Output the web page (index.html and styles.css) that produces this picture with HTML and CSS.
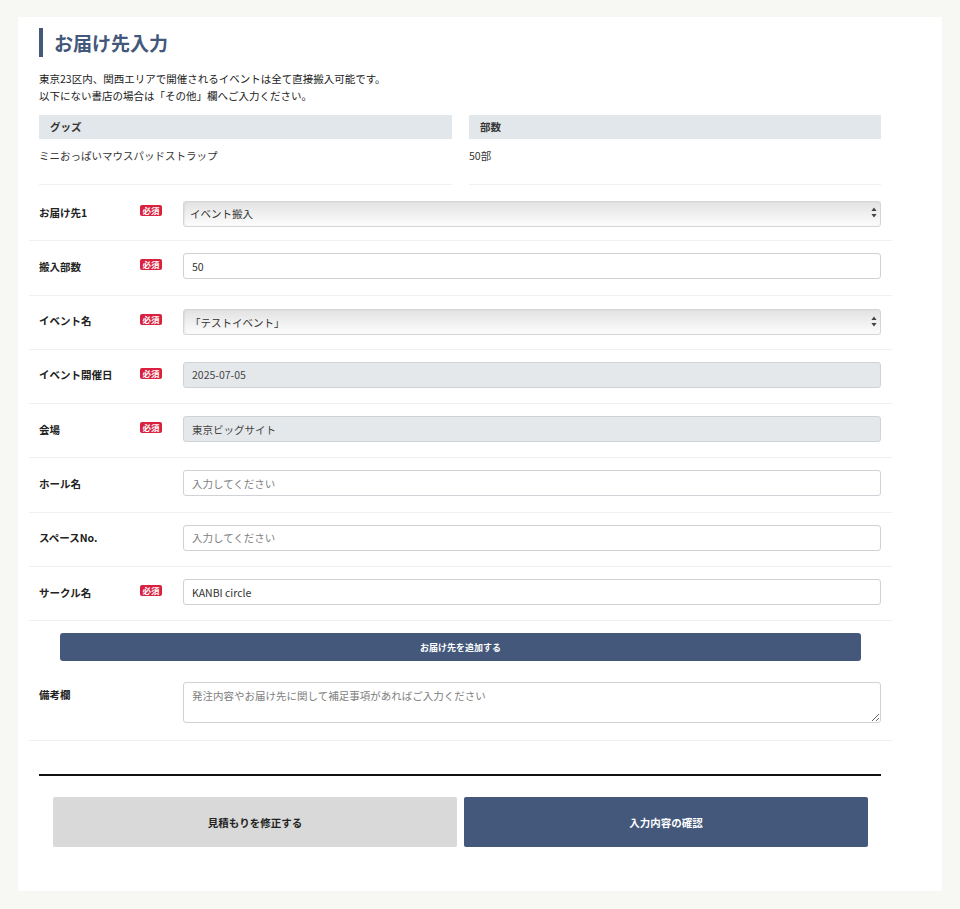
FILE: index.html
```html
<!DOCTYPE html>
<html lang="ja">
<head>
<meta charset="utf-8">
<title>お届け先入力</title>
<link rel="stylesheet" href="styles.css">
</head>
<body>
<div class="page">
  <div class="card">
    <div class="intro">
      <h1 class="title">お届け先入力</h1>
      <p class="desc">東京23区内、関西エリアで開催されるイベントは全て直接搬入可能です。<br>以下にない書店の場合は「その他」欄へご入力ください。</p>
      <div class="summary">
        <div class="sum-col">
          <div class="sum-head">グッズ</div>
          <div class="sum-body">ミニおっぱいマウスパッドストラップ</div>
        </div>
        <div class="sum-col">
          <div class="sum-head">部数</div>
          <div class="sum-body">50部</div>
        </div>
      </div>
    </div>

    <div class="form">
      <div class="row first">
        <div class="label">お届け先1</div>
        <span class="badge">必須</span>
        <div class="select-wrap">
          <select class="select"><option>イベント搬入</option></select>
          <svg class="arrows" width="6" height="11" viewBox="0 0 6 11"><path d="M3 0.5 L5.6 4 H0.4 Z M3 10.5 L5.6 7 H0.4 Z" fill="#444"/></svg>
        </div>
      </div>
      <div class="row">
        <div class="label">搬入部数</div>
        <span class="badge">必須</span>
        <input class="input" type="text" value="50">
      </div>
      <div class="row">
        <div class="label">イベント名</div>
        <span class="badge">必須</span>
        <div class="select-wrap">
          <select class="select"><option>「テストイベント」</option></select>
          <svg class="arrows" width="6" height="11" viewBox="0 0 6 11"><path d="M3 0.5 L5.6 4 H0.4 Z M3 10.5 L5.6 7 H0.4 Z" fill="#444"/></svg>
        </div>
      </div>
      <div class="row">
        <div class="label">イベント開催日</div>
        <span class="badge">必須</span>
        <input class="input disabled" type="text" value="2025-07-05" disabled>
      </div>
      <div class="row">
        <div class="label">会場</div>
        <span class="badge">必須</span>
        <input class="input disabled" type="text" value="東京ビッグサイト" disabled>
      </div>
      <div class="row">
        <div class="label">ホール名</div>
        <input class="input" type="text" placeholder="入力してください">
      </div>
      <div class="row">
        <div class="label">スペースNo.</div>
        <input class="input" type="text" placeholder="入力してください">
      </div>
      <div class="row">
        <div class="label">サークル名</div>
        <span class="badge">必須</span>
        <input class="input" type="text" value="KANBI circle">
      </div>

      <div class="add-area">
        <button class="add-btn" type="button">お届け先を追加する</button>
      </div>

      <div class="row remark">
        <div class="label">備考欄</div>
        <textarea class="textarea" placeholder="発注内容やお届け先に関して補足事項があればご入力ください"></textarea>
      </div>
    </div>

    <hr class="divider">

    <div class="actions">
      <button class="btn btn-back" type="button">見積もりを修正する</button>
      <button class="btn btn-next" type="button">入力内容の確認</button>
    </div>
  </div>
</div>
</body>
</html>
```
FILE: styles.css
```css
* { box-sizing: border-box; }

html, body {
  margin: 0;
  padding: 0;
  background: #f7f7f3;
  font-family: "Noto Sans CJK JP", "Noto Sans", sans-serif;
  color: #222;
}

.page {
  padding: 17px 18px 18px;
}

.card {
  background: #fff;
  width: 924px;
  height: 874px;
  padding: 11px 50px 0 11px;
}

.intro {
  padding: 0 11px 0 10px;
}

.title {
  margin: 0;
  height: 29px;
  border-left: 4px solid #43587a;
  padding-left: 11px;
  font-size: 19px;
  line-height: 29px;
  font-weight: 700;
  color: #43587a;
}

.desc {
  margin: 13px 0 0;
  font-size: 10.5px;
  line-height: 17px;
  color: #222;
}

.summary {
  margin-top: 11px;
  display: grid;
  grid-template-columns: 413px 1fr;
  column-gap: 17px;
}

.sum-head {
  background: #e1e7ea;
  height: 24px;
  line-height: 24px;
  padding-left: 11px;
  font-size: 10.5px;
  font-weight: 700;
  color: #333;
}

.sum-body {
  height: 46px;
  padding-top: 8px;
  line-height: 17px;
  font-size: 10.5px;
  color: #333;
  border-bottom: 1px solid #f0f0f0;
}

.form {
  margin-top: 2px;
}

.row {
  display: grid;
  grid-template-columns: 101px 43px 1fr;
  align-items: center;
  padding: 12px 11px 15.3px 10px;
  border-bottom: 1px solid #f0f0f0;
}

.label {
  grid-column: 1;
  font-size: 10.5px;
  font-weight: 700;
  color: #222;
}

.badge {
  grid-column: 2;
  justify-self: start;
  align-self: center;
  margin-top: -3px;
  width: 22px;
  height: 11px;
  border-radius: 2px;
  background: #d9213f;
  color: #fff;
  font-size: 8.5px;
  font-weight: 700;
  line-height: 11px;
  text-align: center;
}

.select-wrap,
.input,
.textarea {
  grid-column: 3;
}

.select-wrap {
  position: relative;
  height: 26px;
}

.select {
  appearance: none;
  -webkit-appearance: none;
  width: 100%;
  height: 26px;
  margin: 0;
  border: 1px solid #d3d6d9;
  border-radius: 3px;
  background: linear-gradient(to bottom, #e2e2e2 0%, #f1f1f1 55%, #fcfcfc 100%);
  box-shadow: inset 1px 0 2px rgba(0,0,0,0.06);
  padding: 0 20px 0 6px;
  font-family: inherit;
  font-size: 10.5px;
  color: #333;
}

.arrows {
  position: absolute;
  right: 4px;
  top: 8px;
}

.input {
  width: 100%;
  height: 26px;
  margin: 0;
  border: 1px solid #cfd3d7;
  border-radius: 3px;
  background: #fff;
  padding: 0 8px;
  font-family: inherit;
  font-size: 10.5px;
  color: #333;
  outline: none;
}

.input::placeholder,
.textarea::placeholder {
  color: #808080;
}

.input.disabled {
  background: #e5e8eb;
  color: #444;
  -webkit-text-fill-color: #444;
  opacity: 1;
}

.add-area {
  padding: 12px 31px 0;
}

.add-btn {
  display: block;
  width: 100%;
  height: 28px;
  border: 0;
  border-radius: 3px;
  background: #43587a;
  color: #fff;
  font-family: inherit;
  font-size: 9px;
  font-weight: 700;
}

.row.remark {
  grid-template-columns: 144px 1fr;
  align-items: start;
  padding-top: 21px;
  padding-bottom: 17px;
}

.row.remark .label {
  padding-top: 5px;
}

.textarea {
  grid-column: 2;
  display: block;
  width: 100%;
  height: 41px;
  margin: 0;
  border: 1px solid #cfd3d7;
  border-radius: 3px;
  padding: 4px 8px;
  font-family: inherit;
  font-size: 10.5px;
  line-height: 17px;
  color: #333;
  outline: none;
}

.divider {
  margin: 33px 11px 0 10px;
  border: 0;
  height: 2px;
  background: #111;
}

.actions {
  margin: 21px 0 0 10px;
  padding: 0 24px 0 14px;
  display: grid;
  grid-template-columns: 1fr 1fr;
  column-gap: 7px;
}

.btn {
  height: 50px;
  border: 0;
  border-radius: 2px;
  font-family: inherit;
  font-size: 10.5px;
  font-weight: 700;
}

.btn-back {
  background: #d9d9d9;
  color: #222;
}

.btn-next {
  background: #43587a;
  color: #fff;
}
```
